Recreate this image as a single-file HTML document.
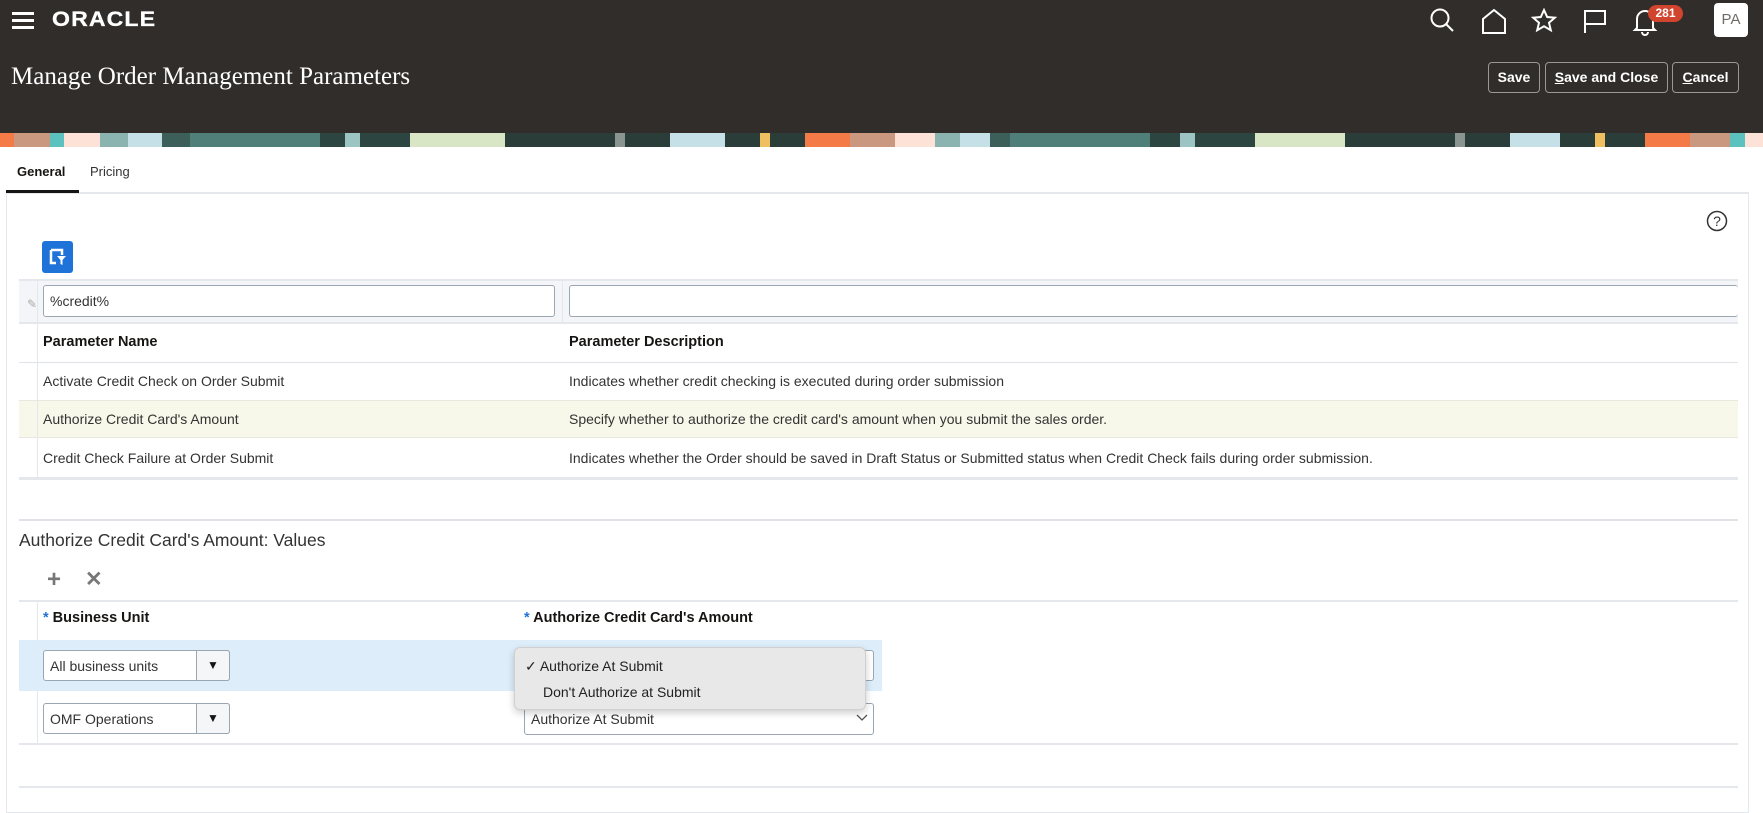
<!DOCTYPE html>
<html><head><meta charset="utf-8">
<style>
*{box-sizing:border-box;margin:0;padding:0}
body{width:1763px;height:800px;overflow:hidden;background:#fff;font-family:"Liberation Sans",Arial,sans-serif;color:#161513;position:relative}
.a{position:absolute}
#hdr{left:0;top:0;width:1763px;height:133px;background:#312d2a}
#ban{left:0;top:133px;width:1763px;height:14px;
background:linear-gradient(90deg,#f47b48 0 14px,#c9987f 14px 50px,#5bc2c0 50px 64px,#fde2d8 64px 100px,#8bb3b0 100px 128px,#c5e0e6 128px 162px,#3d5f5a 162px 190px,#4f7f78 190px 320px,#2d4540 320px 345px,#9cc4c2 345px 360px,#2d4540 360px 410px,#d9e6c6 410px 505px,#2b3d39 505px 615px,#8a9591 615px 625px,#2b3d39 625px 670px,#c5e0e6 670px 725px,#2b3d39 725px 760px,#f0c060 760px 770px,#2b3d39 770px 805px,#f47b48 805px 850px,#c9987f 850px 895px,#fde2d8 895px 935px,#8bb3b0 935px 960px,#c5e0e6 960px 990px,#3d5f5a 990px 1010px,#4f7f78 1010px 1150px,#2d4540 1150px 1180px,#9cc4c2 1180px 1195px,#2d4540 1195px 1255px,#d9e6c6 1255px 1345px,#2b3d39 1345px 1455px,#8a9591 1455px 1465px,#2b3d39 1465px 1510px,#c5e0e6 1510px 1560px,#2b3d39 1560px 1595px,#f0c060 1595px 1605px,#2b3d39 1605px 1645px,#f47b48 1645px 1690px,#c9987f 1690px 1730px,#5bc2c0 1730px 1745px,#fde2d8 1745px 1763px)}
.btn{top:62px;height:31px;border:1.5px solid #9a9794;border-radius:4px;color:#fff;font-weight:bold;font-size:14px;line-height:28px;text-align:center}
.ico{stroke:#fff;fill:none;stroke-width:2}
.t14{font-size:14px}
.inp{border:1.5px solid #9aa6b2;border-radius:3px;background:#fff}
.hl{height:1px;background:#dfe3e8}
</style></head><body>
<div id="hdr" class="a"></div>
<div id="ban" class="a"></div>
<div class="a" style="left:12px;top:12px;width:22px;height:3px;background:#fff"></div>
<div class="a" style="left:12px;top:19px;width:22px;height:3px;background:#fff"></div>
<div class="a" style="left:12px;top:26px;width:22px;height:3px;background:#fff"></div>
<div class="a" style="left:52px;top:8px;color:#fff;font-size:21px;letter-spacing:1px;font-weight:bold;transform:scaleX(1.1);transform-origin:left;-webkit-text-stroke:0.3px #fff">ORACLE</div>
<div class="a" style="left:11px;top:63px;color:#fff;font-family:'Liberation Serif',serif;font-size:25px">Manage Order Management Parameters</div>
<svg class="a" style="left:1428px;top:6px" width="30" height="30" viewBox="0 0 30 30"><circle class="ico" cx="12" cy="12" r="8.5"/><path class="ico" d="M18 18l7 7"/></svg>
<svg class="a" style="left:1479px;top:6px" width="30" height="30" viewBox="0 0 30 30"><path class="ico" d="M4 27V13L15 4l11 9v14z"/></svg>
<svg class="a" style="left:1529px;top:6px" width="30" height="30" viewBox="0 0 30 30"><path class="ico" d="M15 4l3.2 7 7.6.7-5.8 5 1.8 7.5L15 20.3 8.2 24.2 10 16.7l-5.8-5 7.6-.7z"/></svg>
<svg class="a" style="left:1580px;top:6px" width="30" height="30" viewBox="0 0 30 30"><path class="ico" d="M5 27V5h20v13H5"/></svg>
<svg class="a" style="left:1630px;top:6px" width="30" height="30" viewBox="0 0 30 30"><path class="ico" d="M7 22V13a8 8 0 0 1 16 0v9l2 2H5zM12 26a3 3 0 0 0 6 0"/></svg>
<div class="a" style="left:1648px;top:5px;width:35px;height:17px;border-radius:9px;background:#d1442e;color:#fff;font-size:12px;font-weight:bold;text-align:center;line-height:17px">281</div>
<div class="a" style="left:1714px;top:3px;width:34px;height:34px;border-radius:4px;background:#fff;color:#6f6c69;font-size:15px;text-align:center;line-height:34px">PA</div>
<div class="a btn" style="left:1488px;width:52px">Save</div>
<div class="a btn" style="left:1545px;width:123px"><u>S</u>ave and Close</div>
<div class="a btn" style="left:1672px;width:67px"><u>C</u>ancel</div>
<div class="a" style="left:17px;top:164px;font-size:13px;font-weight:bold">General</div>
<div class="a" style="left:90px;top:164px;font-size:13px;color:#333">Pricing</div>
<div class="a" style="left:6px;top:192px;width:1743px;height:2px;background:#e4e8ec"></div>
<div class="a" style="left:6px;top:190px;width:73px;height:3px;background:#161513"></div>
<div class="a" style="left:6px;top:193px;width:1743px;height:620px;border:1.5px solid #e4e8ec;border-top:none"></div>
<svg class="a" style="left:1706px;top:210px" width="22" height="22" viewBox="0 0 22 22"><circle cx="11" cy="11" r="9.5" fill="none" stroke="#333" stroke-width="1.5"/><text x="11" y="16" text-anchor="middle" font-size="14" font-family="Liberation Sans" fill="#333">?</text></svg>
<div class="a" style="left:42px;top:241px;width:31px;height:32px;background:#1f73d8;border-radius:3px"></div>
<svg class="a" style="left:42px;top:241px" width="31" height="32" viewBox="0 0 31 32"><path d="M9 9h11v5M9 9v13h5" stroke="#fff" stroke-width="2.5" fill="none"/><path d="M15 15h9l-3.5 4v5l-2-1v-4z" fill="#fff"/></svg>
<div class="a" style="left:19px;top:279px;width:1719px;height:45px;background:#f3f5f8;border-top:2px solid #e4e8ec;border-bottom:2px solid #e4e8ec"></div>
<div class="a" style="left:37px;top:279px;width:1px;height:200px;background:#e4e8ec"></div>
<div class="a" style="left:562px;top:279px;width:1px;height:45px;background:#e4e8ec"></div>
<div class="a" style="left:27px;top:297px;color:#aaa;font-size:12px">✎</div>
<div class="a inp" style="left:43px;top:285px;width:512px;height:32px"></div>
<div class="a t14" style="left:50px;top:293px;color:#333">%credit%</div>
<div class="a inp" style="left:569px;top:285px;width:1169px;height:32px;border-right:none"></div>
<div class="a" style="left:43px;top:334px;font-size:14.5px;font-weight:bold">Parameter Name</div>
<div class="a" style="left:569px;top:334px;font-size:14.5px;font-weight:bold">Parameter Description</div>
<div class="a hl" style="left:19px;top:362px;width:1719px"></div>
<div class="a t14" style="left:43px;top:373px;color:#333">Activate Credit Check on Order Submit</div>
<div class="a t14" style="left:569px;top:373px;color:#333">Indicates whether credit checking is executed during order submission</div>
<div class="a" style="left:19px;top:400px;width:1719px;height:38px;background:#f7f8ea;border-top:1px solid #e7e9e0;border-bottom:1px solid #e7e9e0"></div>
<div class="a" style="left:37px;top:400px;width:1px;height:38px;background:#e4e8ec"></div>
<div class="a t14" style="left:43px;top:411px;color:#333">Authorize Credit Card's Amount</div>
<div class="a t14" style="left:569px;top:411px;color:#333">Specify whether to authorize the credit card's amount when you submit the sales order.</div>
<div class="a t14" style="left:43px;top:450px;color:#333">Credit Check Failure at Order Submit</div>
<div class="a t14" style="left:569px;top:450px;color:#333">Indicates whether the Order should be saved in Draft Status or Submitted status when Credit Check fails during order submission.</div>
<div class="a" style="left:19px;top:477px;width:1719px;height:3px;background:#e4e8ec"></div>
<div class="a hl" style="left:19px;top:519px;width:1719px;height:2px"></div>
<div class="a" style="left:19px;top:530px;font-size:17.5px;color:#333">Authorize Credit Card's Amount: Values</div>
<div class="a" style="left:47px;top:566px;font-size:24px;font-weight:bold;color:#777">+</div>
<div class="a" style="left:85px;top:567px;font-size:21px;font-weight:bold;color:#777">✕</div>
<div class="a" style="left:19px;top:600px;width:1719px;height:2px;background:#e4e8ec"></div>
<div class="a" style="left:37px;top:601px;width:1px;height:143px;background:#e4e8ec"></div>
<div class="a" style="left:43px;top:610px;font-size:14.5px;font-weight:bold"><span style="color:#1f73d8">*</span> Business Unit</div>
<div class="a" style="left:524px;top:610px;font-size:14.5px;font-weight:bold"><span style="color:#1f73d8">*</span> Authorize Credit Card's Amount</div>
<div class="a" style="left:19px;top:640px;width:863px;height:51px;background:#ddeefa"></div>
<div class="a inp" style="left:43px;top:650px;width:187px;height:31px"></div>
<div class="a" style="left:196px;top:650px;width:34px;height:31px;border:1.5px solid #9aa6b2;border-radius:0 3px 3px 0;background:#f5f6f8;font-size:12px;text-align:center;line-height:29px">▼</div>
<div class="a t14" style="left:50px;top:658px;color:#333">All business units</div>
<div class="a inp" style="left:524px;top:650px;width:350px;height:31px"></div>
<div class="a inp" style="left:43px;top:703px;width:187px;height:31px"></div>
<div class="a" style="left:196px;top:703px;width:34px;height:31px;border:1.5px solid #9aa6b2;border-radius:0 3px 3px 0;background:#f5f6f8;font-size:12px;text-align:center;line-height:29px">▼</div>
<div class="a t14" style="left:50px;top:711px;color:#333">OMF Operations</div>
<div class="a inp" style="left:524px;top:703px;width:350px;height:32px"></div>
<div class="a t14" style="left:531px;top:711px;color:#333">Authorize At Submit</div>
<svg class="a" style="left:856px;top:713px" width="12" height="10"><path d="M1 2l5 5 5-5" stroke="#555" fill="none" stroke-width="1.3"/></svg>
<div class="a" style="left:19px;top:743px;width:1719px;height:2px;background:#e4e8ec"></div>
<div class="a" style="left:19px;top:786px;width:1719px;height:1.5px;background:#e4e8ec"></div>
<div class="a" style="left:514px;top:647px;width:352px;height:63px;background:#e8e8e8;border:1px solid #d0d0d0;border-radius:6px;box-shadow:0 3px 8px rgba(0,0,0,.2)"></div>
<div class="a t14" style="left:525px;top:658px;color:#222">✓ Authorize At Submit</div>
<div class="a t14" style="left:543px;top:684px;color:#222">Don't Authorize at Submit</div>
</body></html>
